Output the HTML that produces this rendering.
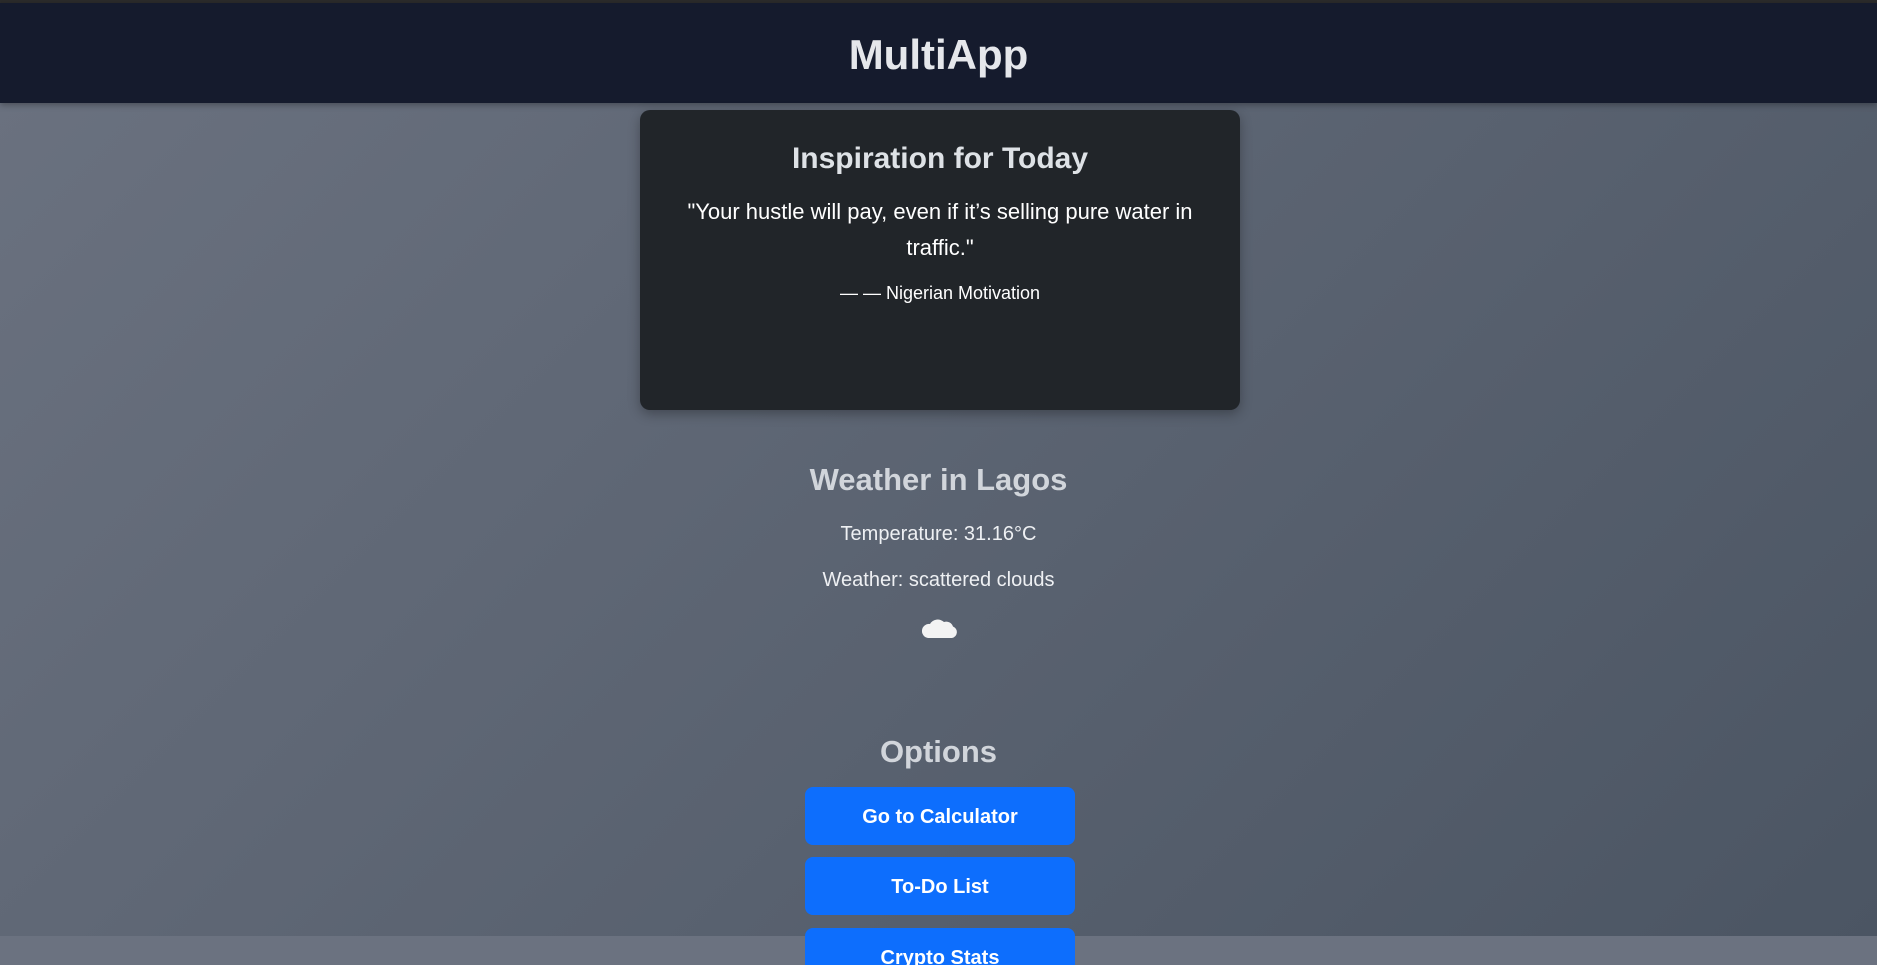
<!DOCTYPE html>
<html><head><meta charset="utf-8"><style>
*{margin:0;padding:0;box-sizing:border-box}
html,body{width:1877px;height:965px;overflow:hidden}
body{font-family:"Liberation Sans",sans-serif;background:#6b7280;position:relative}
.bg{position:absolute;left:0;top:0;width:1877px;height:936px;background:linear-gradient(135deg,#6b7280 0%,#4b5563 100%)}
.topline{position:absolute;left:0;top:0;width:1877px;height:3px;background:#2b2b2b}
header{position:absolute;left:0;top:3px;width:1877px;height:100px;background:#151b2d;color:#e5e7eb;text-align:center;font-size:42px;font-weight:bold;line-height:104px;box-shadow:0 2px 6px rgba(0,0,0,.3)}
.card{position:absolute;left:640px;top:110px;width:600px;height:300px;background:#212529;border-radius:10px;box-shadow:0 4px 12px rgba(0,0,0,.3);text-align:center;color:#fff}
.card h2{font-weight:bold;font-size:30px;color:#dee2e6;margin-top:29px;line-height:40px}
.card .q{font-size:22px;line-height:36px;margin:15px auto 0;width:540px}
.card .a{font-size:18px;margin-top:17px}
.c{position:absolute;left:0;width:1877px;text-align:center}
.h{color:#d1d5db;font-size:31px;font-weight:bold}
.t{color:#eef0f3;font-size:20px}
.btn{position:absolute;left:805px;width:270px;height:58px;background:#0d6efd;border-radius:8px;color:#fff;font-weight:bold;font-size:20px;text-align:center;line-height:60px}
</style></head><body>
<div class="bg"></div>
<div class="topline"></div>
<header>MultiApp</header>
<div class="card">
<h2>Inspiration for Today</h2>
<div class="q">"Your hustle will pay, even if it’s selling pure water in traffic."</div>
<div class="a">— — Nigerian Motivation</div>
</div>
<div class="c h" style="top:462px">Weather in Lagos</div>
<div class="c t" style="top:523px">Temperature: 31.16°C</div>
<div class="c t" style="top:569px">Weather: scattered clouds</div>
<svg style="position:absolute;left:922px;top:614px" width="36" height="26" viewBox="0 0 36 26"><path d="M6 24 H30 A6 6 0 0 0 31 12.5 A7 7 0 0 0 22 8 A9 9 0 0 0 8 10 A7 7 0 0 0 6 24 Z" fill="#f3f3f3"/></svg>
<div class="c h" style="top:734px">Options</div>
<div class="btn" style="top:787px">Go to Calculator</div>
<div class="btn" style="top:857px">To-Do List</div>
<div class="btn" style="top:928px">Crypto Stats</div>
</body></html>
